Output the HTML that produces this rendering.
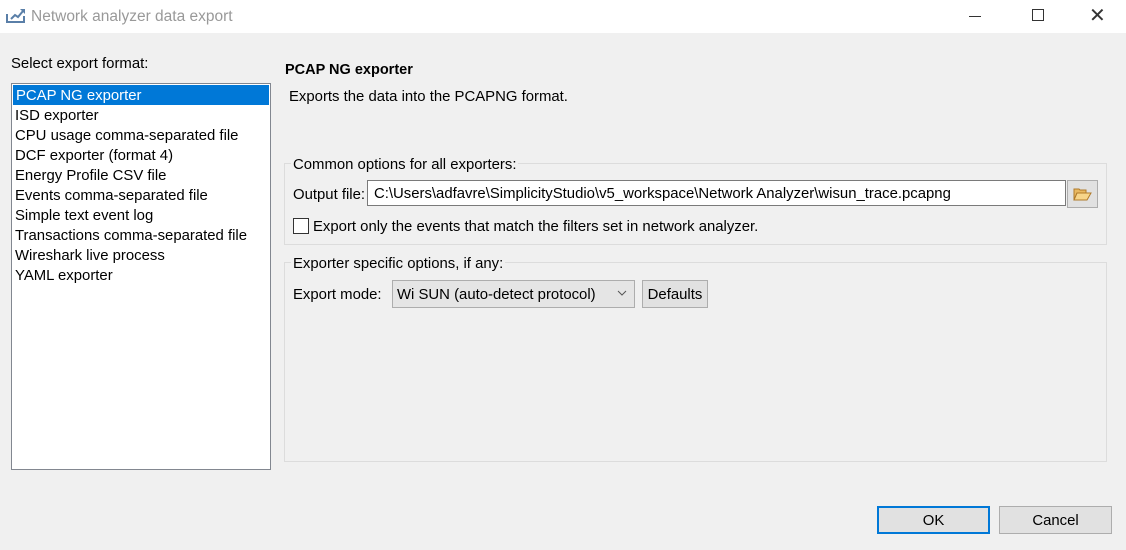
<!DOCTYPE html><html><head><style>
body{margin:0;width:1126px;height:550px;background:#f0f0f0;font-family:"Liberation Sans",sans-serif;font-size:14.9px;color:#000;position:relative;overflow:hidden}
.a{position:absolute;white-space:nowrap}
.tb{left:0;top:0;width:1126px;height:33px;background:#fff}
.list{left:11px;top:83px;width:258px;height:385px;background:#fff;border:1px solid #828790}
.list div{height:20px;line-height:22px;padding-left:3px}
.sel{background:#0078d7;color:#fff;margin:1px 1px 0}
.grp{border:1px solid #dcdcdc}
.lg{background:#f0f0f0;padding:0 2px}
.btn{background:#e1e1e1;border:1px solid #adadad;text-align:center;box-sizing:border-box}
</style></head><body>
<div class="a tb"></div>
<svg class="a" style="left:6px;top:7px" width="20" height="16" viewBox="0 0 20 16"><path d="M1 7v8h17V9" fill="none" stroke="#5a7fa8" stroke-width="2"/><path d="M5 12l4-4 3 2 5-6" fill="none" stroke="#5a7fa8" stroke-width="2"/><path d="M14 2h5v5z" fill="#5a7fa8"/></svg>
<div class="a" style="left:31px;top:8px;font-size:15.5px;color:#999">Network analyzer data export</div>
<div class="a" style="left:969px;top:16px;width:12px;height:1px;background:#333"></div>
<div class="a" style="left:1032px;top:9px;width:10px;height:10px;border:1px solid #333"></div>
<div class="a" style="left:1089px;top:3px;font-size:20px;color:#333">✕</div>
<div class="a" style="left:11px;top:56px">Select export format:</div>
<div class="a list">
<div class="sel">PCAP NG exporter</div><div>ISD exporter</div><div>CPU usage comma-separated file</div><div>DCF exporter (format 4)</div><div>Energy Profile CSV file</div><div>Events comma-separated file</div><div>Simple text event log</div><div>Transactions comma-separated file</div><div>Wireshark live process</div><div>YAML exporter</div>
</div>
<div class="a" style="left:285px;top:62px;font-weight:bold;font-size:14.5px">PCAP NG exporter</div>
<div class="a" style="left:289px;top:89px">Exports the data into the PCAPNG format.</div>
<div class="a grp" style="left:284px;top:163px;width:821px;height:80px"></div>
<div class="a lg" style="left:291px;top:157px">Common options for all exporters:</div>
<div class="a" style="left:293px;top:187px">Output file:</div>
<div class="a" style="left:367px;top:180px;width:691px;height:24px;background:#fff;border:1px solid #7a7a7a;line-height:27px;padding-left:6px;box-sizing:content-box">C:\Users\adfavre\SimplicityStudio\v5_workspace\Network Analyzer\wisun_trace.pcapng</div>
<div class="a btn" style="left:1067px;top:180px;width:31px;height:28px"></div>
<svg class="a" style="left:1073px;top:187px" width="19" height="14" viewBox="0 0 19 14"><path d="M1 2h5l1 1h6v3H4L1 13z" fill="#e8b860" stroke="#b07a2a"/><path d="M4 6h14l-4 7H1z" fill="#f7d58a" stroke="#b07a2a"/></svg>
<div class="a" style="left:293px;top:218px;width:14px;height:14px;border:1px solid #333;background:#fff"></div>
<div class="a" style="left:313px;top:219px">Export only the events that match the filters set in network analyzer.</div>
<div class="a grp" style="left:284px;top:262px;width:821px;height:198px"></div>
<div class="a lg" style="left:291px;top:256px">Exporter specific options, if any:</div>
<div class="a" style="left:293px;top:287px">Export mode:</div>
<div class="a btn" style="left:392px;top:280px;width:243px;height:28px;text-align:left;padding:6px 4px;background:#e5e5e5">Wi SUN (auto-detect protocol)</div>
<svg class="a" style="left:617px;top:290px" width="10" height="6"><path d="M1 1l4 4 4-4" fill="none" stroke="#555"/></svg>
<div class="a btn" style="left:642px;top:280px;width:66px;height:28px;line-height:28px">Defaults</div>
<div class="a btn" style="left:877px;top:506px;width:113px;height:28px;line-height:27px;border:2px solid #0078d7">OK</div>
<div class="a btn" style="left:999px;top:506px;width:113px;height:28px;line-height:28px">Cancel</div>
</body></html>
